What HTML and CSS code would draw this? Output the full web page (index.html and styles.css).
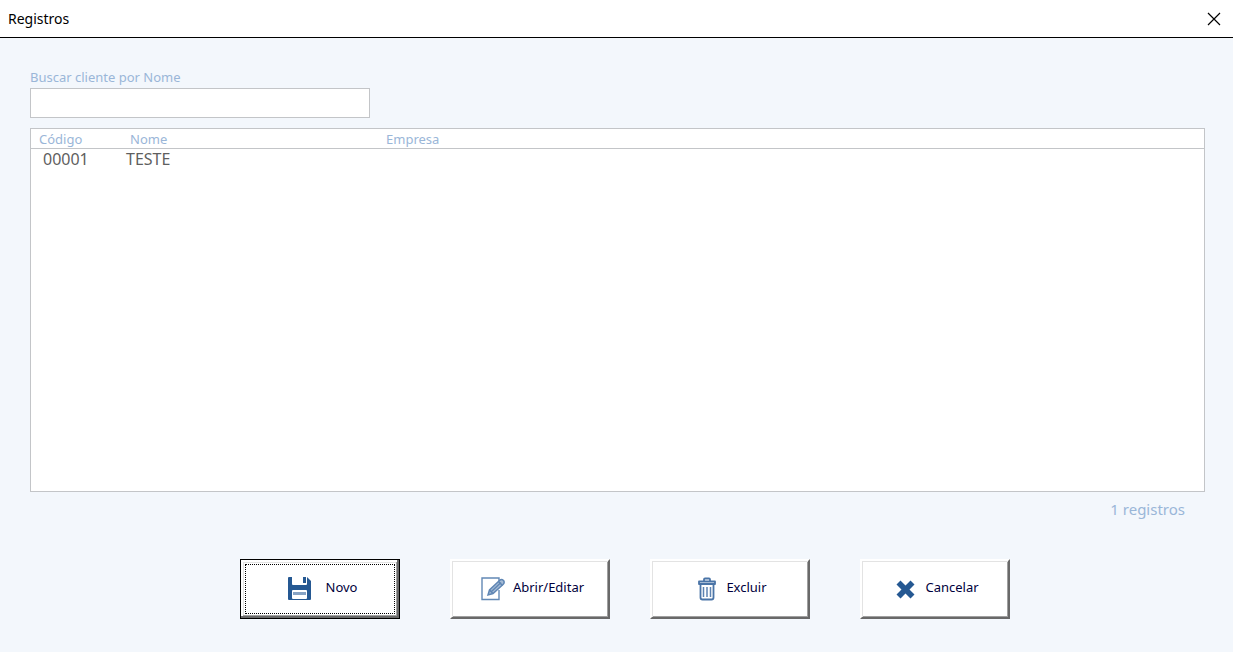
FILE: index.html
```html
<!DOCTYPE html>
<html lang="pt-BR">
<head>
  <meta charset="UTF-8" />
  <meta name="viewport" content="width=device-width, initial-scale=1.0"/>
  <title>Registros</title>
  <link rel="stylesheet" href="styles.css">
</head>
<body>
  <header class="titlebar">
    <h1>Registros</h1>
    <button class="close" type="button" aria-label="Fechar">
      <svg width="14" height="14" viewBox="0 0 14 14">
        <path d="M1 1L13 13M13 1L1 13" stroke="#000" stroke-width="1.2" fill="none"/>
      </svg>
    </button>
  </header>

  <main class="content">
    <label class="search-label" for="busca">Buscar cliente por Nome</label>
    <input class="search" id="busca" type="text">

    <div class="list">
      <table>
        <thead>
          <tr>
            <th class="col-codigo">Código</th>
            <th class="col-nome">Nome</th>
            <th>Empresa</th>
          </tr>
        </thead>
        <tbody>
          <tr>
            <td class="codigo">00001</td>
            <td>TESTE</td>
            <td></td>
          </tr>
        </tbody>
      </table>
    </div>
    <p class="count">1 registros</p>

    <div class="actions">
      <button class="btn default" type="button">
        <svg width="24" height="24" viewBox="0 0 24 24">
          <path d="M1 0H4V7Q4 8 5 8H18Q19 8 19 7V0L23 4V22Q23 23 22 23H1Q0 23 0 22V1Q0 0 1 0Z" fill="#255892"/>
          <rect x="15" y="0" width="3" height="6" fill="#255892"/>
          <rect x="4" y="13" width="15" height="9" rx="1" fill="#fff"/>
          <rect x="5" y="15" width="13" height="3" fill="#87a3c4"/>
        </svg>
        <span>Novo</span>
      </button>
      <button class="btn edit" type="button">
        <svg width="24" height="24" viewBox="0 0 24 24">
          <path d="M18 13V22.500H1V1H18V4" fill="none" stroke="#6288b5" stroke-width="1.400"/>
          <path d="M7 18L8.500 13L18.500 3.500Q20.500 1.500 22.500 3.500Q24 5.500 22 7.500L12 16.500Z" fill="#a5bbd5" stroke="#5f86b4" stroke-width="1.500"/>
          <path d="M10.500 14.500L20 5.500M17.500 4.500L21.500 8.500M8.500 13L12 16.500" fill="none" stroke="#5f86b4" stroke-width="1.500"/>
        </svg>
        <span>Abrir/Editar</span>
      </button>
      <button class="btn" type="button">
        <svg width="18" height="24" viewBox="0 0 18 24">
          <path d="M6 4V2.500Q6 1.500 7 1.500H11Q12 1.500 12 2.500V4M1 4.500H17V7H1ZM2.500 7V20.500Q2.500 22.500 4.500 22.500H13.500Q15.500 22.500 15.500 20.500V7" fill="none" stroke="#4a74a7" stroke-width="1.800" stroke-linejoin="round"/>
          <path d="M5.500 10V20M9 10V20M12.500 10V20" stroke="#5d83b2" stroke-width="1.500"/>
        </svg>
        <span>Excluir</span>
      </button>
      <button class="btn cancel" type="button">
        <svg width="19" height="19" viewBox="0 0 19 19">
          <path d="M4.500 0.500L9.500 5.500L14.500 0.500L18.500 4.500L13.500 9.500L18.500 14.500L14.500 18.500L9.500 13.500L4.500 18.500L0.500 14.500L5.500 9.500L0.500 4.500Z" fill="#255892"/>
        </svg>
        <span>Cancelar</span>
      </button>
    </div>
  </main>
</body>
</html>
```
FILE: styles.css
```css
* {
  margin: 0;
  padding: 0;
  box-sizing: border-box;
}

body {
  display: flex;
  flex-direction: column;
  min-height: 100vh;
  background: #f3f7fc;
  color: #9ab6d8;
  font-family: "Noto Sans", sans-serif;
  font-size: 13px;
}

.titlebar {
  display: flex;
  align-items: center;
  justify-content: space-between;
  height: 38px;
  padding: 0 12px 0 8px;
  background: #fff;
  border-bottom: 1px solid #000;
}

.titlebar h1 {
  color: #000;
  font-size: 14px;
  font-weight: normal;
}

.close {
  display: flex;
  background: none;
  border: none;
}

.content {
  flex: 1;
  display: flex;
  flex-direction: column;
  padding: 30px 28px 33px 30px;
}

.search-label {
  line-height: 18px;
  margin-bottom: 2px;
}

.search {
  width: 340px;
  height: 30px;
  padding: 0 6px;
  background: #fff;
  border: 1px solid #c3c5c8;
  outline: none;
  font: inherit;
  color: #5f5f5f;
}

.list {
  flex: 1;
  margin-top: 10px;
  background: #fff;
  border: 1px solid #c3c5c8;
}

table {
  width: 100%;
  border-spacing: 0;
  table-layout: fixed;
}

th {
  height: 20px;
  padding: 0 8px;
  border-bottom: 1px solid #c3c5c8;
  font-weight: normal;
  line-height: 18px;
  text-align: left;
}

td {
  padding: 0 4px;
  color: #5f5f5f;
  font-size: 16px;
  line-height: 20px;
}

.col-codigo {
  width: 91px;
}

.col-nome {
  width: 256px;
}

.codigo {
  padding-left: 12px;
}

.count {
  padding: 7px 20px 0 0;
  font-size: 15px;
  line-height: 20px;
  text-align: right;
}

.actions {
  display: flex;
  justify-content: center;
  gap: 50px;
  margin-top: 40px;
  padding-left: 15px;
}

.btn {
  display: flex;
  align-items: center;
  justify-content: center;
  gap: 10px;
  width: 160px;
  height: 60px;
  padding-left: 5px;
  background: #fff;
  border: 2px solid #fff;
  border-right-color: #696969;
  border-bottom-color: #696969;
  box-shadow: inset 1px 1px #e3e3e3, inset -1px -1px #a0a0a0;
  color: #00003c;
  font-family: "Noto Sans", sans-serif;
  font-size: 13px;
}

.btn span {
  padding-bottom: 4px;
}

/* default button: black frame plus the dotted focus rectangle */
.default {
  gap: 14px;
  border: 1px solid #000;
  box-shadow: inset -2px -2px #696969, inset 2px 2px #fff, inset -3px -3px #a0a0a0, inset 3px 3px #e3e3e3;
  outline: 1px dotted #000;
  outline-offset: -6px;
}

.edit {
  gap: 8px;
  margin-right: -10px;
}

.cancel {
  width: 150px;
}
```
